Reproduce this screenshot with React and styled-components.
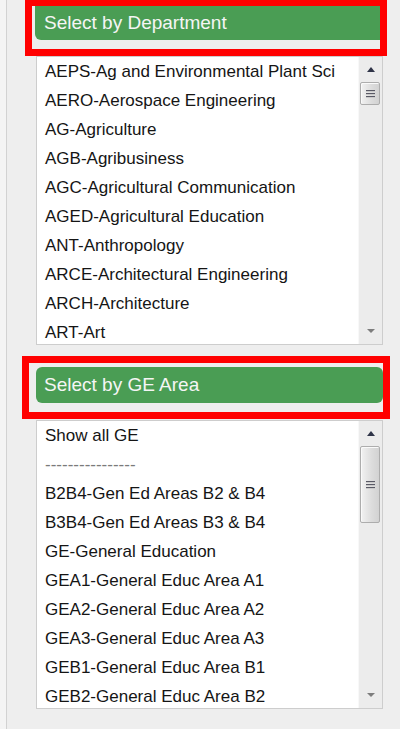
import React from 'react';
import styled, { createGlobalStyle } from 'styled-components';

const GlobalStyle = createGlobalStyle`
  html, body {
    margin: 0;
    padding: 0;
    background: #f4f4f4;
    font-family: "Liberation Sans", Arial, sans-serif;
  }
`;

const Panel = styled.div`
  margin-left: 6px;
  border-left: 1px solid #d2d2d2;
  background: #eeeeee;
  height: 729px;
  overflow: hidden;
  padding: 0 17px 0 29px;
`;

const Highlight = styled.div`
  border: 7px solid #ff0000;
  margin: ${p => p.$top}px ${p => p.$right}px 0 ${p => p.$left}px;
  padding: ${p => p.$padTop}px 0 9px ${p => p.$padLeft}px;
  background: #eeeeee;
`;

const Header = styled.div`
  background: #4a9d54;
  color: #f5f5f5;
  font-size: 19px;
  height: ${p => p.$height}px;
  line-height: ${p => p.$height - 1}px;
  padding-left: ${p => p.$indent}px;
  border-radius: ${p => p.$radius};
`;

const ListBox = styled.div`
  display: flex;
  height: 289px;
  box-sizing: border-box;
  border: 1px solid #cdcdcd;
  background: #ffffff;
  margin-top: ${p => p.$gap}px;
`;

const Items = styled.div`
  flex: 1;
  overflow: hidden;
`;

const Item = styled.div`
  font-size: 17px;
  line-height: 29px;
  height: 29px;
  padding-left: 8px;
  white-space: nowrap;
  color: ${p => (p.$muted ? '#7a7a7a' : '#151515')};
`;

const Track = styled.div`
  position: relative;
  width: 23px;
  border-left: 1px solid #f8f8f8;
  background: #ececec;
`;

const Arrow = styled.div`
  position: absolute;
  left: 8px;
  width: 0;
  height: 0;
  border-left: 4px solid transparent;
  border-right: 4px solid transparent;
  ${p =>
    p.$down
      ? `bottom: 11px; border-top: 4px solid #7d7d7d;`
      : `top: 10px; border-bottom: 5px solid #2f3448;`}
`;

const Thumb = styled.div`
  position: absolute;
  top: 25px;
  left: 1px;
  width: 20px;
  height: ${p => p.$height}px;
  box-sizing: border-box;
  border: 1px solid #adadad;
  border-radius: 2px;
  background: linear-gradient(to right, #f2f2f2, #dcdcdc 60%, #d2d2d2);
  box-shadow: inset 1px 1px 0 #fafafa;
  display: flex;
  flex-direction: column;
  align-items: center;
  justify-content: center;
  gap: 2px;
`;

const Grip = styled.span`
  display: block;
  width: 9px;
  height: 1px;
  background: #5a5a66;
  box-shadow: 0 1px 0 #c9c9c9;
`;

function Scrollbar({ thumb }) {
  return (
    <Track>
      <Arrow />
      <Thumb $height={thumb}>
        <Grip />
        <Grip />
        <Grip />
      </Thumb>
      <Arrow $down />
    </Track>
  );
}

const departments = [
  'AEPS-Ag and Environmental Plant Sci',
  'AERO-Aerospace Engineering',
  'AG-Agriculture',
  'AGB-Agribusiness',
  'AGC-Agricultural Communication',
  'AGED-Agricultural Education',
  'ANT-Anthropology',
  'ARCE-Architectural Engineering',
  'ARCH-Architecture',
  'ART-Art',
];

const geAreas = [
  'Show all GE',
  '----------------',
  'B2B4-Gen Ed Areas B2 & B4',
  'B3B4-Gen Ed Areas B3 & B4',
  'GE-General Education',
  'GEA1-General Educ Area A1',
  'GEA2-General Educ Area A2',
  'GEA3-General Educ Area A3',
  'GEB1-General Educ Area B1',
  'GEB2-General Educ Area B2',
];

export default function App() {
  return (
    <>
      <GlobalStyle />
      <Panel>
        <Highlight $top={-1} $left={-11} $right={-4} $padTop={0} $padLeft={3}>
          <Header $height={34} $indent={9} $radius="0 0 0 6px">
            Select by Department
          </Header>
        </Highlight>
        <ListBox $gap={0}>
          <Items>
            {departments.map(d => (
              <Item key={d}>{d}</Item>
            ))}
          </Items>
          <Scrollbar thumb={23} />
        </ListBox>

        <Highlight $top={11} $left={-14} $right={-7} $padTop={4} $padLeft={7}>
          <Header $height={36} $indent={8} $radius="6px">
            Select by GE Area
          </Header>
        </Highlight>
        <ListBox $gap={1}>
          <Items>
            {geAreas.map(g => (
              <Item key={g} $muted={g.startsWith('-')}>
                {g}
              </Item>
            ))}
          </Items>
          <Scrollbar thumb={77} />
        </ListBox>
      </Panel>
    </>
  );
}
